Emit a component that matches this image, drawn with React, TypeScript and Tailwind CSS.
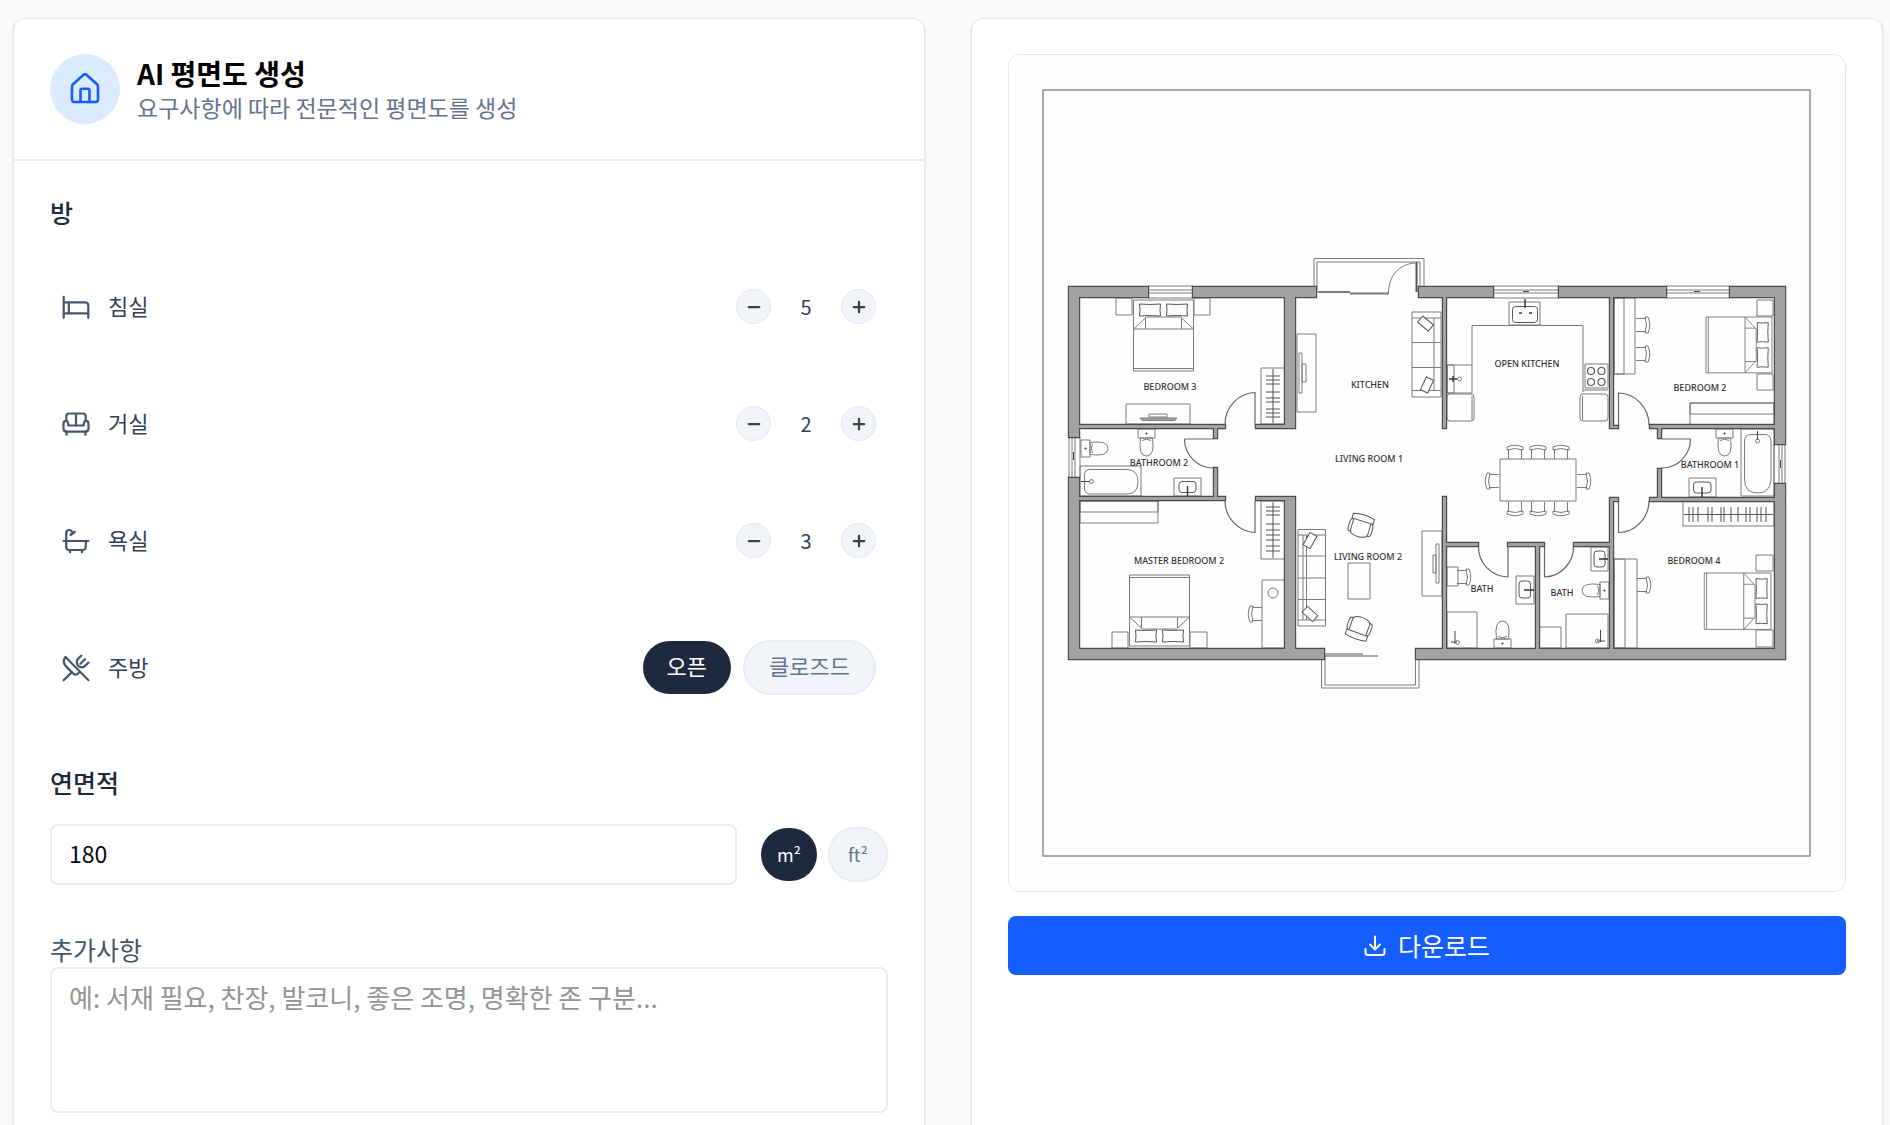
import { useState } from "react";
import type { ReactNode } from "react";
import { Minus, Plus } from "lucide-react";

type Box = [number, number, number, number];

export default function App() {
  return (
    <div className="h-screen overflow-hidden bg-slate-50 pt-[18px] pr-[7px] pl-[13px] font-['Noto_Sans_CJK_KR','Noto_Sans',sans-serif]">
      <div className="grid grid-cols-2 gap-[46px]">
        <FormCard />
        <ResultCard />
      </div>
    </div>
  );
}

function FormCard() {
  const [bedrooms, setBedrooms] = useState(5);
  const [livingRooms, setLivingRooms] = useState(2);
  const [bathrooms, setBathrooms] = useState(3);
  const [kitchen, setKitchen] = useState("open");
  const [unit, setUnit] = useState("m2");
  const [area, setArea] = useState("180");

  return (
    <section className="rounded-xl border border-slate-200 bg-white shadow-sm">
      <header className="flex items-center gap-[17px] border-b-2 border-[#e8ecf3] px-9 py-[35px]">
        <div className="flex h-[70px] w-[70px] items-center justify-center rounded-full bg-blue-100 text-[#155dfc]">
          <HomeIcon />
        </div>
        <div className="pt-0.5">
          <h1 className="text-[28px] leading-[34px] font-bold text-black">AI 평면도 생성</h1>
          <p className="text-[23px] leading-[34px] text-slate-500">요구사항에 따라 전문적인 평면도를 생성</p>
        </div>
      </header>

      <div className="px-9 pt-[33px] pb-[35px]">
        <h2 className="mb-[18px] text-[25px] leading-9 font-medium text-slate-800">방</h2>
        <Row icon={<BedIcon />} label="침실">
          <Counter label="침실" value={bedrooms} onChange={setBedrooms} />
        </Row>
        <Row icon={<SofaIcon />} label="거실">
          <Counter label="거실" value={livingRooms} onChange={setLivingRooms} />
        </Row>
        <Row icon={<BathIcon />} label="욕실">
          <Counter label="욕실" value={bathrooms} onChange={setBathrooms} />
        </Row>
        <Row icon={<UtensilsIcon />} label="주방">
          <div className="flex items-center gap-3">
            <Pill active={kitchen === "open"} onClick={() => setKitchen("open")}>오픈</Pill>
            <Pill active={kitchen === "closed"} onClick={() => setKitchen("closed")}>클로즈드</Pill>
          </div>
        </Row>

        <label htmlFor="area" className="mt-7 block text-[25px] leading-9 font-medium text-slate-800">연면적</label>
        <div className="mt-6 flex items-center">
          <input
            id="area"
            type="text"
            inputMode="numeric"
            value={area}
            onChange={(e) => setArea(e.target.value)}
            className="mr-6 h-[61px] min-w-0 flex-1 rounded-lg border-2 border-[#e8ecf3] px-[17px] pb-1 text-[23px] text-slate-950 outline-none"
          />
          <div className="flex items-center gap-[11px]">
            <UnitButton active={unit === "m2"} onClick={() => setUnit("m2")}>m²</UnitButton>
            <UnitButton active={unit === "ft2"} onClick={() => setUnit("ft2")}>ft²</UnitButton>
          </div>
        </div>

        <label htmlFor="notes" className="mt-[46px] block text-[25px] leading-9 text-slate-600">추가사항</label>
        <textarea
          id="notes"
          placeholder="예: 서재 필요, 찬장, 발코니, 좋은 조명, 명확한 존 구분..."
          className="block h-[146px] w-full resize-none rounded-lg border-2 border-[#e8ecf3] px-[17px] py-2.5 text-[26px] leading-9 outline-none placeholder:text-[#949494]"
        />
      </div>
    </section>
  );
}

function Row({ icon, label, children }: { icon: ReactNode; label: string; children: ReactNode }) {
  return (
    <div className="flex items-center justify-between px-3 py-[41px]">
      <div className="flex items-center gap-[18px] text-slate-600">
        {icon}
        <span className="pb-1 text-[22px] leading-7 text-slate-700">{label}</span>
      </div>
      {children}
    </div>
  );
}

function Counter({ label, value, onChange }: { label: string; value: number; onChange: (n: number) => void }) {
  const button = "flex h-[35px] w-[35px] items-center justify-center rounded-full border border-slate-200 bg-slate-100 text-neutral-700";
  return (
    <div className="flex items-center">
      <button type="button" aria-label={`${label} 줄이기`} className={button} onClick={() => onChange(Math.max(0, value - 1))}>
        <Minus size={18} strokeWidth={3} />
      </button>
      <span className="w-[70px] text-center text-[20px] leading-8 text-slate-700">{value}</span>
      <button type="button" aria-label={`${label} 늘리기`} className={button} onClick={() => onChange(value + 1)}>
        <Plus size={18} strokeWidth={3} />
      </button>
    </div>
  );
}

function Pill({ active, onClick, children }: { active: boolean; onClick: () => void; children: ReactNode }) {
  return (
    <button
      type="button"
      aria-pressed={active}
      onClick={onClick}
      className={
        active
          ? "h-[53px] rounded-full bg-slate-800 px-6 pb-1 text-[22px] text-white"
          : "h-[55px] rounded-full border-2 border-[#e8ecf3] bg-slate-100 px-6 pb-1 text-[22px] text-slate-500"
      }
    >
      {children}
    </button>
  );
}

function UnitButton({ active, onClick, children }: { active: boolean; onClick: () => void; children: ReactNode }) {
  return (
    <button
      type="button"
      aria-pressed={active}
      onClick={onClick}
      className={
        active
          ? "h-[53px] w-14 rounded-full bg-slate-800 text-[18px] text-white"
          : "h-[55px] w-[60px] rounded-full border-2 border-[#e8ecf3] bg-slate-100 text-[18px] text-slate-500"
      }
    >
      {children}
    </button>
  );
}

function ResultCard() {
  return (
    <section className="rounded-xl border border-slate-200 bg-white px-9 py-[35px] shadow-sm">
      <div className="overflow-hidden rounded-xl border border-slate-200 bg-[#fefefe]">
        <FloorPlan />
      </div>
      <button type="button" className="mt-6 flex h-[59px] w-full items-center justify-center gap-3 rounded-lg bg-[#155dfc] text-[25px] text-white">
        <DownloadIcon />
        다운로드
      </button>
    </section>
  );
}

/* icons */

function HomeIcon() {
  return (
    <svg width="32" height="32" viewBox="0 0 32 32" fill="none" stroke="currentColor" strokeWidth="2.6" strokeLinejoin="round">
      <path d="M3 13.5Q3 12.2 4 11.3L14.6 1.7Q16 .6 17.4 1.7L28 11.3Q29 12.2 29 13.5V26.5Q29 29 26.5 29H5.5Q3 29 3 26.5Z" />
      <path d="M11.5 29V17.5Q11.5 15.8 13.2 15.8H18.8Q20.5 15.8 20.5 17.5V29" />
    </svg>
  );
}

function LineIcon({ children }: { children: ReactNode }) {
  return (
    <svg width="28" height="28" viewBox="0 0 28 28" fill="none" stroke="currentColor" strokeWidth="2.2" strokeLinecap="round" strokeLinejoin="round">
      {children}
    </svg>
  );
}

function BedIcon() {
  return (
    <LineIcon>
      <path d="M1.7 3.8V24.8M1.7 9.3H23Q26.3 9.3 26.3 12.8V24.8M1.7 20.3H26.3M6.8 9.3V20.3" />
    </LineIcon>
  );
}

function SofaIcon() {
  return (
    <LineIcon>
      <path d="M4.3 10.5V6.5Q4.3 3.5 7.3 3.5H20.7Q23.7 3.5 23.7 6.5V10.5M14 3.5V15.5" />
      <path d="M6.5 15.5L5.8 12.4C5.3 10 1.5 10 1.5 14V18.5Q1.5 21.6 4.6 21.6H23.4Q26.5 21.6 26.5 18.5V14C26.5 10 22.7 10 22.2 12.4L21.5 15.5Z" />
      <path d="M4.6 21.6V24.8M23.4 21.6V24.8" />
    </LineIcon>
  );
}

function BathIcon() {
  return (
    <LineIcon>
      <path d="M4.2 14V6Q4.2 3 7 3Q9.2 3 10 4.8M1.5 14H26.5M4.2 14V20Q4.2 23 7.2 23H20.5Q23.5 23 23.7 20L24 14M8 23V25.3M20 23V25.3" />
      <path d="M8.8 7.8L12.5 5" strokeWidth="2.6" />
    </LineIcon>
  );
}

function UtensilsIcon() {
  return (
    <LineIcon>
      <path d="M3.5 3L26.5 26.2M3.5 3C.6 6.6 1.6 10 4.5 12.9L11 19.4C13 21.4 15.8 20.8 17.3 18M1.6 26.3L9.4 18.6" />
      <path d="M19.3 1.6L16 5Q13.5 8 16 11.4Q19.2 15 22.5 12.3L26.5 8.6M23 5.2L18.4 9.8" />
    </LineIcon>
  );
}

function DownloadIcon() {
  return (
    <svg width="22" height="22" viewBox="0 0 22 22" fill="none" stroke="currentColor" strokeWidth="2" strokeLinecap="round" strokeLinejoin="round">
      <path d="M11 1.5V14M6 9.5L11 14.5L16 9.5M1.5 14V17.5Q1.5 20 4 20H18Q20.5 20 20.5 17.5V14" />
    </svg>
  );
}

/* floor plan */

const walls: Box[] = [
  // outer
  [1069, 287, 79, 10], [1193, 287, 123, 10], [1419, 287, 74, 10], [1559, 287, 107, 10], [1730, 287, 55, 10],
  [1069, 287, 10, 150], [1069, 478, 10, 181], [1775, 287, 10, 157], [1775, 484, 10, 175],
  [1069, 649, 255, 10], [1416, 649, 369, 10],
  // left wing
  [1285, 287, 10, 141], [1285, 497, 10, 162],
  [1075, 425, 150, 3], [1256, 425, 39, 3], [1075, 497, 150, 3], [1256, 497, 39, 3],
  [1214, 425, 3, 13], [1214, 468, 3, 32],
  // kitchen and baths
  [1443, 290, 3, 138], [1443, 497, 3, 160], [1610, 290, 3, 138], [1610, 498, 3, 160],
  [1610, 426, 8, 2], [1610, 498, 8, 3],
  [1443, 543, 35, 3], [1508, 543, 36, 3], [1574, 543, 38, 3], [1536, 543, 3, 112],
  // right wing
  [1650, 425, 130, 3], [1650, 498, 130, 3], [1658, 425, 3, 13], [1658, 469, 3, 32],
];

const rooms: [string, number, number][] = [
  ["BEDROOM 3", 1170, 390],
  ["KITCHEN", 1370, 388],
  ["OPEN KITCHEN", 1527, 367],
  ["BEDROOM 2", 1700, 391],
  ["LIVING ROOM 1", 1369, 462],
  ["BATHROOM 2", 1159, 466],
  ["BATHROOM 1", 1710, 468],
  ["MASTER BEDROOM 2", 1179, 564],
  ["LIVING ROOM 2", 1368, 560],
  ["BEDROOM 4", 1694, 564],
  ["BATH", 1482, 592],
  ["BATH", 1562, 596],
];

const boxes: Box[] = [
  // nightstands
  [1116, 298, 16, 17], [1194, 298, 16, 17], [1757, 300, 16, 16], [1757, 374, 16, 16],
  [1112, 632, 16, 16], [1190, 632, 17, 16], [1756, 555, 17, 16], [1756, 630, 17, 17],
  // dressers, desks, shelves
  [1126, 404, 64, 20], [1080, 501, 78, 22], [1080, 501, 78, 11], [1690, 403, 84, 22], [1690, 403, 84, 11],
  [1614, 298, 21, 76], [1614, 298, 10, 76], [1614, 559, 23, 89], [1614, 559, 11, 89], [1262, 580, 23, 68],
  [1297, 334, 19, 78], [1422, 531, 20, 65],
  // screens
  [1149, 414, 18, 3], [1299, 353, 3, 40], [1302, 364, 4, 18], [1436, 544, 3, 39], [1433, 555, 3, 18],
  // wardrobes
  [1261, 368, 24, 56], [1261, 501, 24, 58], [1683, 501, 91, 25],
  // kitchen
  [1509, 302, 31, 23], [1447, 365, 25, 28], [1447, 365, 7, 28], [1585, 364, 23, 24], [1500, 459, 76, 42],
  // wet rooms
  [1080, 466, 61, 30], [1741, 429, 33, 67], [1174, 478, 27, 18], [1689, 478, 27, 19],
  [1516, 576, 18, 28], [1591, 547, 17, 24], [1447, 567, 11, 19],
  [1447, 612, 30, 36], [1539, 627, 22, 21], [1566, 614, 42, 34],
  // coffee table
  [1348, 563, 22, 36],
];

function toPath(list: Box[]) {
  return list.map(([x, y, w, h]) => `M${x} ${y}h${w}v${h}h${-w}z`).join("");
}

function FloorPlan() {
  const wallPath = toPath(walls);
  return (
    <svg viewBox="1009 55 836 836" className="block w-full" role="img" aria-label="평면도" fill="none">
      <rect x="1043" y="90" width="767" height="766" stroke="#858585" strokeWidth="1.4" />

      <g stroke="#7b7b7b" strokeWidth="1">
        <path d={toPath(boxes)} />
        <Windows />
        <Balconies />
        <Doors />
        <Furniture />
        <Fixtures />
      </g>

      <path d={wallPath} stroke="#4b4b4b" strokeWidth="2.4" />
      <path d={wallPath} fill="#a2a2a2" />

      <g className="font-['Noto_Sans',sans-serif] text-[9px] font-medium" fill="#333" textAnchor="middle">
        {rooms.map(([name, x, y]) => (
          <text key={`${name}-${x}`} x={x} y={y}>{name}</text>
        ))}
      </g>
    </svg>
  );
}

function Windows() {
  return (
    <g>
      <path d="M1148 286H1193M1148 290H1193M1148 293H1193M1148 298H1193M1493 286H1559M1493 290H1559M1493 293H1559M1493 298H1559M1666 286H1730M1666 290H1730M1666 293H1730M1666 298H1730" />
      <path d="M1069 437V478M1072 437V478M1075 437V478M1080 437V478M1774 444V484M1779 444V484M1782 444V484M1785 444V484" />
      <path d="M1523 291.5H1529M1694 291.5H1700M1073.5 452V460M1780.5 460V468" stroke="#444" />
    </g>
  );
}

function Balconies() {
  return (
    <g>
      <path d="M1314 292V258.5H1424V287M1317 292V262H1420V290" />
      <path d="M1416.5 262V292" strokeWidth="2" stroke="#555" />
      <path d="M1318 292H1350M1350 293.5H1389" strokeWidth="2" />
      <path d="M1388.5 293C1388.5 276 1399 263.5 1416 263" />
      <path d="M1321.5 655V688H1419V655M1325 655V685H1415.5V655" />
      <path d="M1324 654H1363M1324 656H1378" stroke="#555" />
    </g>
  );
}

function Doors() {
  return (
    <g stroke="#666" strokeWidth="1.2">
      <path d="M1255 425V392.5A31 32 0 0 0 1225 425" />
      <path d="M1255 501V532.5A31 32 0 0 1 1225 501" />
      <path d="M1213 439H1184.5A29 29 0 0 0 1213 468" />
      <path d="M1618.5 427V393A31 32 0 0 1 1649 425" />
      <path d="M1618.5 501V532.5A31 32 0 0 0 1649 501" />
      <path d="M1662 439H1690.5A29 29 0 0 1 1662 468" />
      <path d="M1508 546V577A30 30 0 0 1 1478.5 546" />
      <path d="M1544.5 546V577A30 30 0 0 0 1573.5 546" />
    </g>
  );
}

function Bed({ place }: { place: string }) {
  return (
    <g transform={place}>
      <path d="M0 0H60V71H0ZM0 29H60M0 68.5H60M0 29L13 17H47L60 29M12 17.5V29M48 17.5V29" />
      <path d="M6 4Q16 5 27 4Q26 10 27 16Q16 15 6 16Q7 10 6 4ZM33 4Q44 5 54 4Q53 10 54 16Q44 15 33 16Q34 10 33 4Z" stroke="#555" />
    </g>
  );
}

function Chair({ place }: { place: string }) {
  return (
    <g transform={place}>
      <path d="M1.5 14V4M14.5 14V4M0 2Q8 -1.5 16 2V5Q8 2 0 5Z" />
    </g>
  );
}

function Armchair({ place }: { place: string }) {
  return (
    <g transform={place} stroke="#555">
      <path d="M-11 -10Q0 -13 11 -10V-5H-11ZM-9 -5V6Q-9 9 -6 10Q0 12 6 10Q9 9 9 6V-5M-9 -5Q-12 -5 -12 0V5Q-12 8 -9 8M9 -5Q12 -5 12 0V5Q12 8 9 8" />
    </g>
  );
}

function Toilet({ place }: { place: string }) {
  return (
    <g transform={place}>
      <path d="M0 0H17V9H0ZM2.5 9H14.5M2.5 9Q0 27 8.5 27Q17 27 14.5 9M4 11.5Q8.5 9 13 11.5" />
      <circle cx="8.5" cy="4.5" r=".8" fill="#333" />
    </g>
  );
}

function Furniture() {
  const rackLeftTop = [376, 380, 384, 392, 398, 402, 409, 413, 417];
  const rackLeftBottom = [507, 511, 515, 524, 530, 535, 540, 546, 551];
  const rackRight = [1689, 1693, 1698, 1708, 1712, 1721, 1724, 1731, 1738, 1746, 1750, 1757, 1761, 1766];
  return (
    <g>
      <Bed place="translate(1133.5 300)" />
      <Bed place="translate(1189.5 646) rotate(180)" />
      <Bed place="translate(1772 317) rotate(90) scale(.93)" />
      <Bed place="translate(1771 573) rotate(90) scale(.94)" />

      {/* wardrobe rails */}
      <path d="M1273 369V423M1273 502V558M1684 514.5H1773" stroke="#555" />
      <path d={rackLeftTop.map((y) => `M1266 ${y}h14`).join("")} stroke="#555" />
      <path d={rackLeftBottom.map((y) => `M1266 ${y}h14`).join("")} stroke="#555" />
      <path d={rackRight.map((x) => `M${x} 507v15`).join("")} stroke="#555" />

      {/* sofas */}
      <path d="M1412 312H1441V397H1412ZM1412 318H1441M1412 390.5H1441M1412 342.5H1441M1412 367.5H1441M1434 318V390.5" />
      <path d="M1298 529.5H1325.5V626H1298ZM1298 535H1325.5M1298 620H1325.5M1298 556H1325.5M1298 578H1325.5M1298 599.5H1325.5M1303 535V620M1306.5 535V620" />
      <g fill="#fefefe" stroke="#555">
        <rect x="-7" y="-4" width="14" height="8" transform="translate(1425.5 323.5) rotate(40)" />
        <rect x="-7" y="-4" width="14" height="8" transform="translate(1427 385) rotate(-65)" />
        <rect x="-7" y="-4" width="14" height="8" transform="translate(1310 540.5) rotate(-60)" />
        <rect x="-7" y="-4" width="14" height="8" transform="translate(1310 614) rotate(42)" />
      </g>
      <Armchair place="translate(1361 526) rotate(17)" />
      <Armchair place="translate(1359 628) rotate(200)" />
      <path d="M1140 418H1177L1175 420.5H1142Z" fill="#aaa" />

      {/* dining table */}
      <Chair place="translate(1507 445)" />
      <Chair place="translate(1530 445)" />
      <Chair place="translate(1553 445)" />
      <Chair place="translate(1523 516) rotate(180)" />
      <Chair place="translate(1546 516) rotate(180)" />
      <Chair place="translate(1569 516) rotate(180)" />
      <Chair place="translate(1485 489) rotate(-90)" />
      <Chair place="translate(1591 473) rotate(90)" />

      {/* desk chairs */}
      <Chair place="translate(1650 317) rotate(90)" />
      <Chair place="translate(1650 346) rotate(90)" />
      <Chair place="translate(1651 577) rotate(90)" />
      <Chair place="translate(1248 622) rotate(-90)" />
      <Chair place="translate(1471 569) rotate(90)" />
      <circle cx="1273" cy="593" r="5" />
    </g>
  );
}

function Fixtures() {
  return (
    <g>
      {/* counter, hob and fridges */}
      <path d="M1472 365V325.5H1583V392M1583 390H1608" />
      <rect x="1512.5" y="306.5" width="25" height="16" rx="3" stroke="#555" />
      <path d="M1525 299V308M1519 313H1522M1529 313H1532M1449 379H1457M1453 376V382" stroke="#333" strokeWidth="1.4" />
      <circle cx="1459.5" cy="379" r="2" />
      <rect x="1447" y="394" width="27" height="27" rx="3" />
      <path d="M1472 396V420M1582.5 396V420" />
      <rect x="1580" y="394" width="28" height="27" rx="3" />
      <g stroke="#555" strokeWidth="1.2">
        <circle cx="1591" cy="371" r="3.5" />
        <circle cx="1601.5" cy="371" r="3.5" />
        <circle cx="1591" cy="382" r="3.5" />
        <circle cx="1601.5" cy="382" r="3.5" />
      </g>

      <Toilet place="translate(1138 429)" />
      <Toilet place="translate(1081 457) rotate(-90)" />
      <Toilet place="translate(1716 429)" />
      <Toilet place="translate(1511 648) rotate(180)" />
      <Toilet place="translate(1609 582) rotate(90)" />

      {/* tubs */}
      <path d="M1090 469.5H1127Q1138 470 1138 481.5Q1138 494 1127 494H1090Q1084.5 494 1084.5 488V475Q1084.5 469.5 1090 469.5Z" />
      <path d="M1744.5 441Q1745 434.5 1751 434.5H1765Q1770.5 434.5 1771 441V480Q1770 493 1757.5 493Q1745 493 1744.5 480Z" />
      <path d="M1081 481.5H1090M1757.5 431V440" stroke="#444" />
      <circle cx="1091.5" cy="481.5" r="2" />
      <circle cx="1757.5" cy="441" r="2" />

      {/* basins */}
      <g stroke="#555">
        <rect x="1179" y="481.5" width="17" height="11" rx="3" />
        <rect x="1693.5" y="482" width="17.5" height="11" rx="3" />
        <rect x="1519" y="581" width="11.5" height="17" rx="3" />
        <rect x="1594" y="551" width="11" height="16" rx="3" />
        <path d="M1187.5 486V496M1702 487V497M1524 590H1534M1599 559H1608" stroke="#333" strokeWidth="1.4" />
      </g>

      {/* showers */}
      <path d="M1455 631V644M1451 642H1457M1600.5 630V642M1597 641H1605" stroke="#444" />
      <circle cx="1457.5" cy="642.5" r="2" />
      <circle cx="1597.5" cy="641" r="2" />
    </g>
  );
}
